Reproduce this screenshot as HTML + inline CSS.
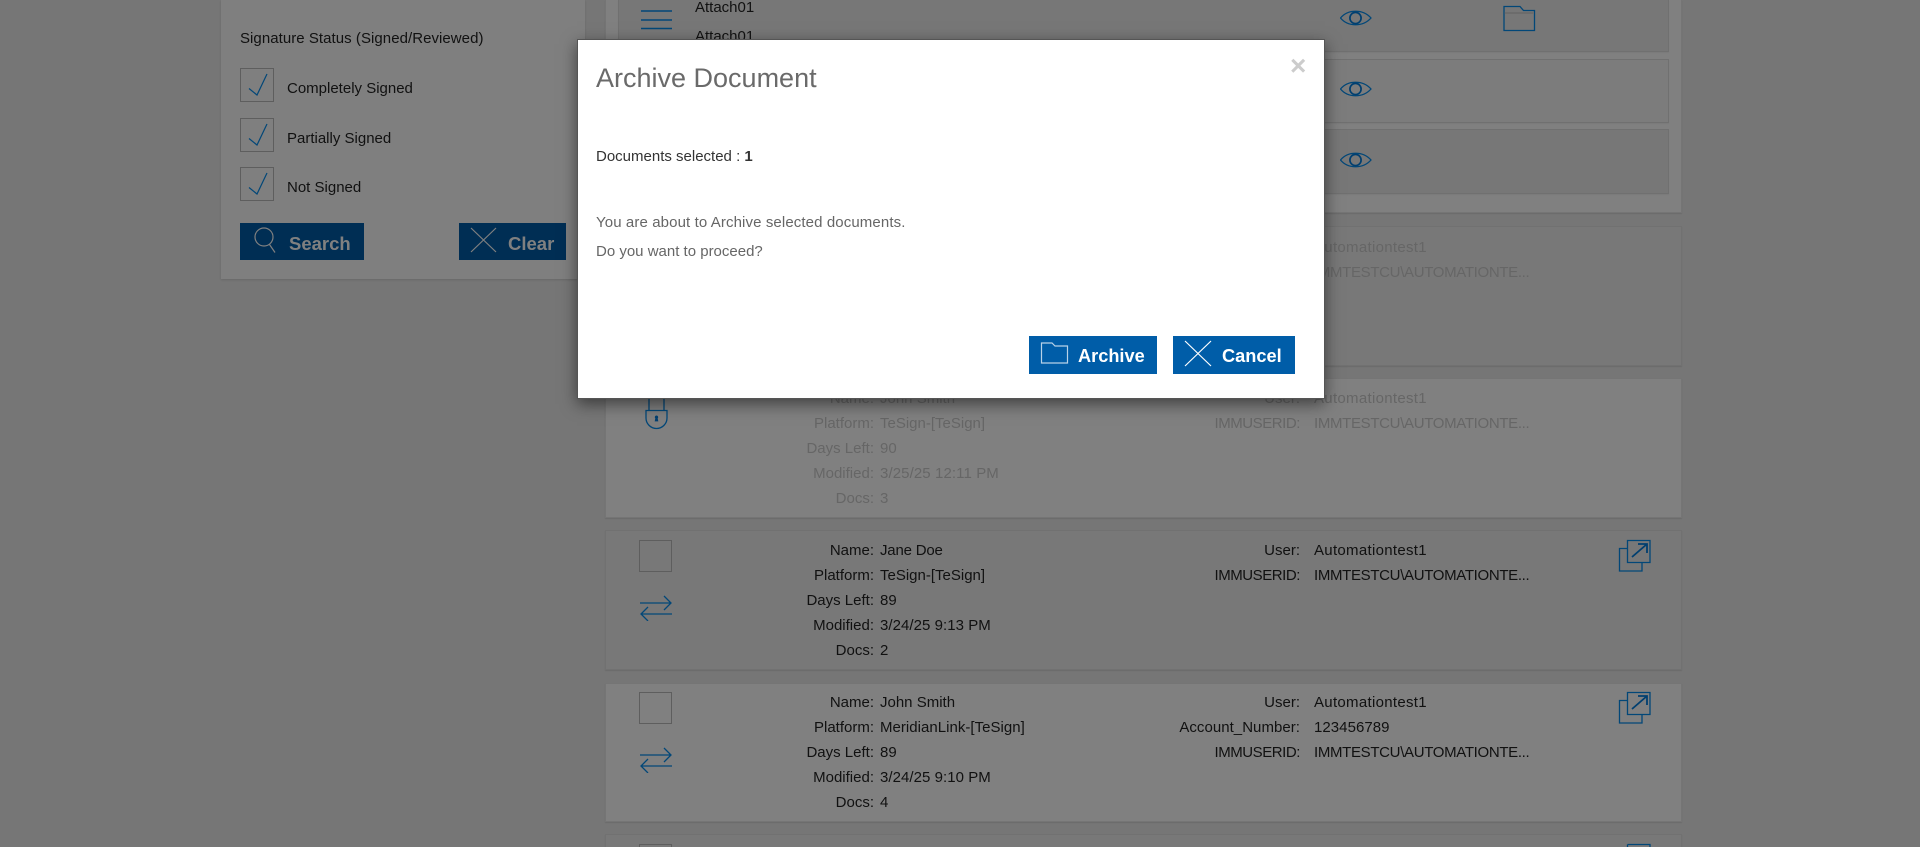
<!DOCTYPE html>
<html lang="en"><head><meta charset="utf-8"><title>Archive Document</title>
<style>
html,body{margin:0;padding:0;width:1920px;height:847px;overflow:hidden;background:#767676}
#root{position:relative;width:1920px;height:847px;overflow:hidden;background:#767676;font-family:"Liberation Sans",sans-serif;color:#111}
#root div,#root span,#root svg{position:absolute;box-sizing:border-box}
b{font-weight:700}
.panel{background:#7f7f7f;box-shadow:0 1px 2px rgba(0,0,0,.12)}
.card{left:605px;width:1077px;background:#808080;box-shadow:0 1px 1px rgba(0,0,0,.1);border:1px solid #757575}
.alt{background:#787878;border-color:#717171}
.row{left:618px;width:1051px;border:1px solid #707070;box-shadow:0 1px 1px rgba(0,0,0,.05)}
.t{white-space:nowrap;font-size:15px;line-height:25px;height:25px}
.l{left:674px;width:200px;text-align:right}
.v{left:880px}
.l2{left:1100px;width:200px;text-align:right}
.v2{left:1314px}
.au{letter-spacing:.3px}
.im{letter-spacing:-.33px}
.iu{letter-spacing:-.45px}
.dim{color:#666}
.cb{width:34px;height:34px;border:1.3px solid #5e5e5e}
.cs{width:33px;height:32px;border:1.3px solid #5e5e5e}
.btn{background:#002e54;color:#808080;font-weight:700;font-size:18.500px;line-height:37px}
.ck{fill:none;stroke:#024778;stroke-width:1.2}
.ic{fill:none;stroke:#024778;stroke-width:1.3}
.st{font-size:15px;line-height:25px;height:25px;white-space:nowrap}
#modal{left:577px;top:39px;width:748px;height:360px;background:#fff;border:1px solid #555;box-shadow:0 5px 15px rgba(0,0,0,.5);color:#333}
.mt{white-space:nowrap;font-size:15px;line-height:25px;height:25px}
.mb{background:#005da8;color:#fff;font-weight:700;font-size:18.200px;line-height:37px}
</style></head><body>
<div id="root">

<div class="panel" style="left:221px;top:0;width:364px;height:279px"></div>
<div class="st" style="left:240px;top:26px;letter-spacing:.05px">Signature Status (Signed/Reviewed)</div>
<div class="cb" style="left:240px;top:68px"></div>
<svg style="left:240px;top:68px" width="34" height="34"><path class="ck" d="M9 20.5L17 27L27 6"/></svg>
<div class="st" style="left:287px;top:76px">Completely Signed</div>
<div class="cb" style="left:240px;top:118px"></div>
<svg style="left:240px;top:118px" width="34" height="34"><path class="ck" d="M9 20.5L17 27L27 6"/></svg>
<div class="st" style="left:287px;top:126px">Partially Signed</div>
<div class="cb" style="left:240px;top:167px"></div>
<svg style="left:240px;top:167px" width="34" height="34"><path class="ck" d="M9 20.5L17 27L27 6"/></svg>
<div class="st" style="left:287px;top:175px">Not Signed</div>
<div class="btn" style="left:240px;top:223px;width:124px;height:37px"><span style="left:49px;top:2px">Search</span>
<svg style="left:0;top:0" width="60" height="37"><circle cx="24" cy="14" r="9" fill="none" stroke="#808080" stroke-width="1.2"/><path d="M29.5 21.5L35 29.5" fill="none" stroke="#808080" stroke-width="1.2"/></svg></div>
<div class="btn" style="left:459px;top:223px;width:107px;height:37px"><span style="left:49px;top:2px">Clear</span>
<svg style="left:0;top:0" width="45" height="37"><path d="M12 5L37 29M37 5L12 29" fill="none" stroke="#808080" stroke-width="1.2"/></svg></div>

<div class="card" style="top:0;height:213px;border-top:none"></div>
<div class="row" style="top:0;height:52px;background:#777;border-top:none"></div>
<div class="row" style="top:59px;height:64px;background:#7c7c7c"></div>
<div class="row" style="top:129px;height:65px;background:#777"></div>
<svg style="left:641px;top:8px" width="32" height="24"><path d="M0 3H31M0 12H31M0 20.5H31" fill="none" stroke="#024778" stroke-width="1.4"/></svg>
<div class="t" style="left:695px;top:0;height:20px;line-height:15px">Attach01</div>
<div class="t" style="left:695px;top:24px">Attach01</div>
<svg style="left:1340px;top:8px" width="32" height="20"><path class="ic" d="M0.5 10C8 1 23 1 31 10C23 19 8 19 .5 10Z"/><circle cx="15.5" cy="10" r="5.6" fill="none" stroke="#003f70" stroke-width="1.7"/></svg>
<svg style="left:1340px;top:79px" width="32" height="20"><path class="ic" d="M0.5 10C8 1 23 1 31 10C23 19 8 19 .5 10Z"/><circle cx="15.5" cy="10" r="5.6" fill="none" stroke="#003f70" stroke-width="1.7"/></svg>
<svg style="left:1340px;top:150px" width="32" height="20"><path class="ic" d="M0.5 10C8 1 23 1 31 10C23 19 8 19 .5 10Z"/><circle cx="15.5" cy="10" r="5.6" fill="none" stroke="#003f70" stroke-width="1.7"/></svg>
<svg style="left:1503px;top:5px" width="33" height="27"><path class="ic" d="M1 1.5H17L20.5 5.5H31.5V25.5H1Z"/><path d="M1.700 8H31" stroke="#6c6c6c" stroke-width="2" fill="none"/></svg>

<div class="card alt" style="top:226px;height:140px"></div>
<div class="dim">
<div class="t l2" style="top:235px">User:</div><div class="t v2 au" style="top:235px">Automationtest1</div>
<div class="t l2 iu" style="top:260px">IMMUSERID:</div><div class="t v2 im" style="top:260px">IMMTESTCU\AUTOMATIONTE...</div>
</div>

<div class="card" style="top:378px;height:140px"></div>
<svg style="left:645px;top:392px" width="24" height="38"><path class="ic" d="M4 19V8C4 2 7.5 0 11.5 0C15.5 0 19 2 19 8V19"/><path class="ic" d="M1 18.500H22V26C22 32 17 36.500 11.500 36.500C6 36.500 1 32 1 26Z"/><path d="M11.500 23.500a1.700 1.700 0 0 1 1.200 2.900l.6 3h-3.600l.6-3a1.700 1.700 0 0 1 1.200-2.900Z" fill="#003f70"/></svg>
<div class="dim">
<div class="t l" style="top:386px">Name:</div><div class="t v" style="top:386px">John Smith</div>
<div class="t l" style="top:411px">Platform:</div><div class="t v" style="top:411px">TeSign-[TeSign]</div>
<div class="t l" style="top:436px">Days Left:</div><div class="t v" style="top:436px">90</div>
<div class="t l" style="top:461px">Modified:</div><div class="t v" style="top:461px;letter-spacing:.1px">3/25/25 12:11 PM</div>
<div class="t l" style="top:486px">Docs:</div><div class="t v" style="top:486px">3</div>
<div class="t l2" style="top:386px">User:</div><div class="t v2 au" style="top:386px">Automationtest1</div>
<div class="t l2 iu" style="top:411px">IMMUSERID:</div><div class="t v2 im" style="top:411px">IMMTESTCU\AUTOMATIONTE...</div>
</div>

<div class="card alt" style="top:530px;height:140px"></div>
<div class="cs" style="left:639px;top:540px"></div>
<svg style="left:640px;top:593px" width="33" height="28"><path class="ic" d="M0 10H31M24 3L31 10L24 17M32 21H1M8 14L1 21L8 28"/></svg>
<div class="t l" style="top:538px">Name:</div><div class="t v" style="top:538px;letter-spacing:-.2px">Jane Doe</div>
<div class="t l" style="top:563px">Platform:</div><div class="t v" style="top:563px">TeSign-[TeSign]</div>
<div class="t l" style="top:588px">Days Left:</div><div class="t v" style="top:588px">89</div>
<div class="t l" style="top:613px">Modified:</div><div class="t v" style="top:613px;letter-spacing:.05px">3/24/25 9:13 PM</div>
<div class="t l" style="top:638px">Docs:</div><div class="t v" style="top:638px">2</div>
<div class="t l2" style="top:538px">User:</div><div class="t v2 au" style="top:538px">Automationtest1</div>
<div class="t l2 iu" style="top:563px">IMMUSERID:</div><div class="t v2 im" style="top:563px">IMMTESTCU\AUTOMATIONTE...</div>
<svg style="left:1618px;top:539px" width="34" height="34"><path class="ic" d="M9.500 1.500H32V23.500H9.500ZM9.500 9.500H1.500V32H24V23.500"/><path d="M14 18L29 5M20 5H29V14" fill="none" stroke="#003f70" stroke-width="1.800"/></svg>

<div class="card" style="top:683px;height:139px"></div>
<div class="cs" style="left:639px;top:692px"></div>
<svg style="left:640px;top:745px" width="33" height="28"><path class="ic" d="M0 10H31M24 3L31 10L24 17M32 21H1M8 14L1 21L8 28"/></svg>
<div class="t l" style="top:690px">Name:</div><div class="t v" style="top:690px">John Smith</div>
<div class="t l" style="top:715px">Platform:</div><div class="t v" style="top:715px;letter-spacing:.03px">MeridianLink-[TeSign]</div>
<div class="t l" style="top:740px">Days Left:</div><div class="t v" style="top:740px">89</div>
<div class="t l" style="top:765px">Modified:</div><div class="t v" style="top:765px;letter-spacing:.05px">3/24/25 9:10 PM</div>
<div class="t l" style="top:790px">Docs:</div><div class="t v" style="top:790px">4</div>
<div class="t l2" style="top:690px">User:</div><div class="t v2 au" style="top:690px">Automationtest1</div>
<div class="t l2" style="top:715px;letter-spacing:.04px">Account_Number:</div><div class="t v2" style="top:715px;letter-spacing:.05px">123456789</div>
<div class="t l2 iu" style="top:740px">IMMUSERID:</div><div class="t v2 im" style="top:740px">IMMTESTCU\AUTOMATIONTE...</div>
<svg style="left:1618px;top:691px" width="34" height="34"><path class="ic" d="M9.500 1.500H32V23.500H9.500ZM9.500 9.500H1.500V32H24V23.500"/><path d="M14 18L29 5M20 5H29V14" fill="none" stroke="#003f70" stroke-width="1.800"/></svg>

<div class="card alt" style="top:834px;height:13px;border-bottom:none"></div>
<div class="cs" style="left:639px;top:844px;height:3px;border-bottom:none"></div>
<svg style="left:1618px;top:843px" width="34" height="4"><path class="ic" d="M9.500 1.500H32V4M9.500 1.500V4"/></svg>

<div id="modal">
  <div style="left:18px;top:22px;font-size:27px;line-height:32px;color:#6a6a6a;white-space:nowrap">Archive Document</div>
  <div style="left:712px;top:12px;font-size:28px;line-height:28px;font-weight:700;color:#ccc">×</div>
  <div class="mt" style="left:18px;top:104px;color:#333">Documents selected : <b>1</b></div>
  <div class="mt" style="left:18px;top:170px;color:#666;letter-spacing:.11px">You are about to Archive selected documents.</div>
  <div class="mt" style="left:18px;top:199px;color:#666">Do you want to proceed?</div>
  <div class="mb" style="left:451px;top:296px;width:128px;height:38px"><span style="left:49px;top:2px">Archive</span>
    <svg style="left:0;top:0" width="40" height="38"><path d="M12.500 7H23L26 10H38.500V27H12.500Z" fill="none" stroke="#b8d2e8" stroke-width="1.200"/></svg></div>
  <div class="mb" style="left:595px;top:296px;width:122px;height:38px"><span style="left:49px;top:2px">Cancel</span>
    <svg style="left:0;top:0" width="45" height="38"><path d="M12 5L38 30M38 5L12 30" fill="none" stroke="#fff" stroke-width="1.200"/></svg></div>
</div>

</div>
</body></html>
